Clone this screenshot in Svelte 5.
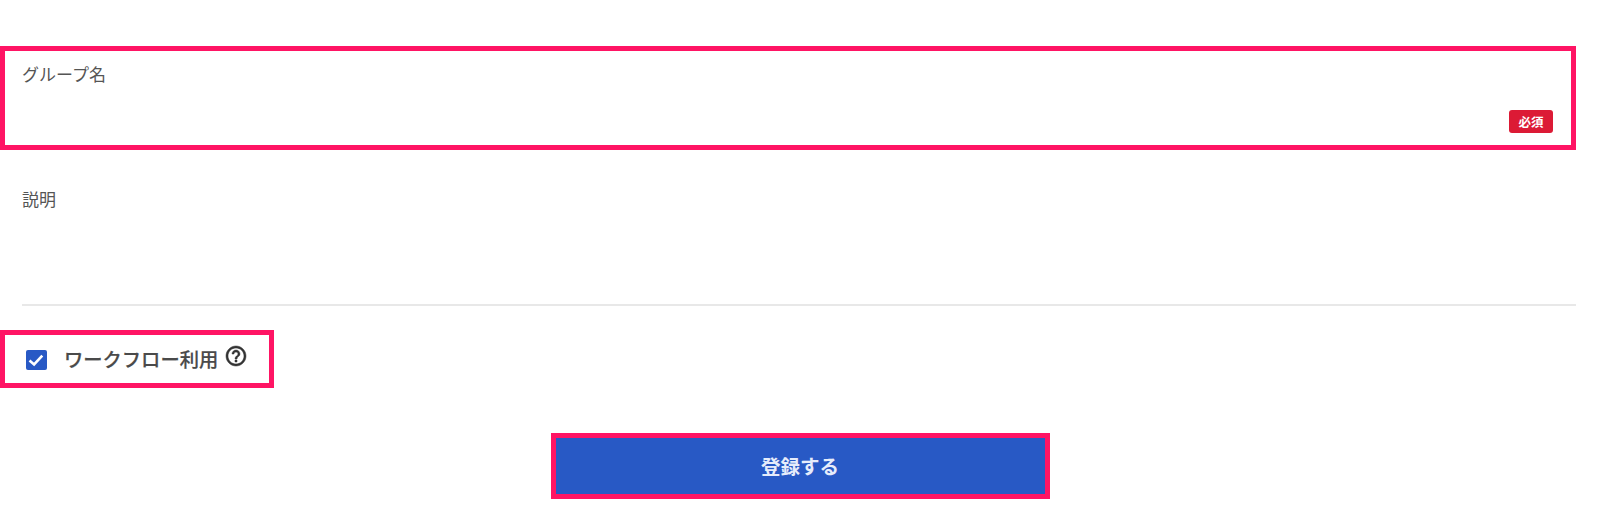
<script>
  let useWorkflow = $state(true);
</script>

<main>
  <div class="field marked">
    <span class="label">グループ名</span>
    <span class="badge">必須</span>
  </div>

  <div class="field plain">
    <span class="label">説明</span>
  </div>

  <label class="workflow marked">
    <input type="checkbox" bind:checked={useWorkflow} />
    <span class="box">
      {#if useWorkflow}
        <svg viewBox="0 0 20 20" width="20" height="20"><path d="M3.5 10.5l4.6 4 8.2-8.8" fill="none" stroke="#fff" stroke-width="2.6" /></svg>
      {/if}
    </span>
    <span class="name">ワークフロー利用</span>
    <svg class="help" viewBox="0 0 24 24" width="24" height="24">
      <path d="M11 18h2v-2h-2v2zm1-16C6.48 2 2 6.48 2 12s4.48 10 10 10 10-4.48 10-10S17.52 2 12 2zm0 18c-4.41 0-8-3.59-8-8s3.59-8 8-8 8 3.59 8 8-3.59 8-8 8zm0-14c-2.21 0-4 1.79-4 4h2c0-1.1.9-2 2-2s2 .9 2 2c0 2-3 1.75-3 5h2c0-2.25 3-2.5 3-5 0-2.21-1.79-4-4-4z" fill="#333" stroke="#333" stroke-width="0.5" />
    </svg>
  </label>

  <div class="actions">
    <button class="marked">登録する</button>
  </div>
</main>

<style>
  :global(body) {
    background: #fff;
    font-family: "Noto Sans CJK JP", "Noto Sans", sans-serif;
    color: #555;
  }

  main {
    width: 1576px;
    padding-top: 46px;
    display: flex;
    flex-direction: column;
  }

  .marked {
    border: 5px solid #ff1464;
    box-sizing: border-box;
  }

  .field {
    box-sizing: border-box;
    display: flex;
    justify-content: space-between;
  }

  .field.marked {
    height: 104px;
    padding: 11px 18px 12px 17px;
  }

  .field.plain {
    height: 156px;
    margin-left: 22px;
    padding-top: 37px;
    border-bottom: 2px solid #e8e8e8;
  }

  .label {
    font-size: 17px;
    line-height: 24px;
    color: #555;
  }

  .badge {
    align-self: flex-end;
    width: 44px;
    height: 23px;
    border-radius: 3px;
    background: #dc1a35;
    color: #fff;
    font-size: 12.5px;
    font-weight: 700;
    line-height: 23px;
    text-align: center;
  }

  .workflow {
    width: 274px;
    height: 58px;
    margin-top: 24px;
    padding-left: 21px;
    display: flex;
    align-items: center;
  }

  .workflow input {
    display: none;
  }

  .box {
    width: 21px;
    height: 20px;
    margin-top: 1px;
    border-radius: 2px;
    background: #2859c5;
    flex: none;
  }

  .box svg {
    display: block;
  }

  .name {
    margin: -1px 0 0 17px;
    font-size: 19.3px;
    font-weight: 500;
    color: #4a4a4a;
    -webkit-text-stroke: 0.2px #4a4a4a;
  }

  .help {
    margin: -6px 0 0 6px;
    flex: none;
  }

  .actions {
    margin-top: 45px;
    display: flex;
    justify-content: center;
    padding-left: 24px;
  }

  button {
    width: 499px;
    height: 66px;
    background: #2859c5;
    color: #e6ecfb;
    font-family: inherit;
    font-size: 19.5px;
    font-weight: 700;
    padding: 0 0 2px;
  }
</style>
